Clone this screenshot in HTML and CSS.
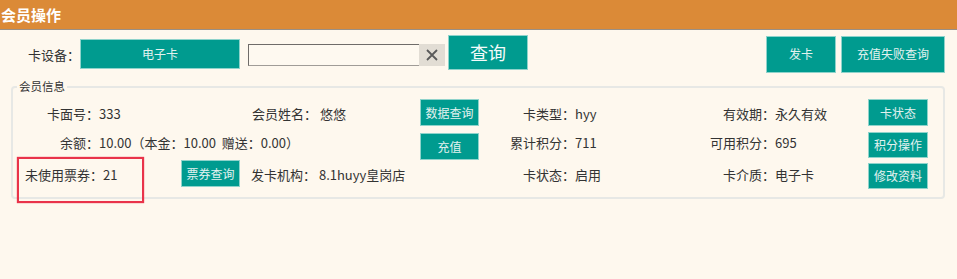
FILE: index.html
```html
<!DOCTYPE html>
<html lang="zh-CN">
<head>
<meta charset="utf-8">
<title>会员操作</title>
<link rel="stylesheet" href="styles.css">
</head>
<body>
<div class="header">会员操作</div>
<div class="toolbar">
  <span class="tb-label">卡设备：</span>
  <button class="btn btn-device">电子卡</button>
  <span class="search">
    <input class="search-input" type="text">
    <span class="search-clear">
      <svg width="14" height="14" viewBox="0 0 14 14"><path d="M2 2 L12 12 M12 2 L2 12" stroke="#5a5a5a" stroke-width="1.8" fill="none"/></svg>
    </span>
  </span>
  <button class="btn btn-query">查询</button>
  <span class="spacer"></span>
  <button class="btn btn-top btn-issue">发卡</button>
  <button class="btn btn-top btn-fail">充值失败查询</button>
</div>
<section class="info">
  <span class="info-legend">会员信息</span>
  <div class="grid">
    <span class="lbl r1 c1">卡面号：</span>
    <span class="val r1 c2">333</span>
    <span class="val r1 c3">会员姓名：&nbsp;悠悠</span>
    <button class="btn btn-sm r1 c4">数据查询</button>
    <span class="lbl r1 c5">卡类型：</span>
    <span class="val r1 c6">hyy</span>
    <span class="lbl r1 c7">有效期：</span>
    <span class="val r1 c8">永久有效</span>
    <button class="btn btn-sm r1 c9">卡状态</button>

    <span class="lbl r2 c1">余额：</span>
    <span class="val r2 c23">10.00（本金：10.00&nbsp;&nbsp;赠送：0.00）</span>
    <button class="btn btn-sm r2 c4 btn-recharge">充值</button>
    <span class="lbl r2 c5">累计积分：</span>
    <span class="val r2 c6">711</span>
    <span class="lbl r2 c7">可用积分：</span>
    <span class="val r2 c8">695</span>
    <button class="btn btn-sm r2 c9 btn-points">积分操作</button>

    <div class="ticket-cell r3 c12">
      <span class="ticket">未使用票券：21</span>
      <button class="btn btn-sm">票券查询</button>
    </div>
    <span class="val r3 c3 issuer">发卡机构：&nbsp;8.1huyy皇岗店</span>
    <span class="lbl r3 c5">卡状态：</span>
    <span class="val r3 c6">启用</span>
    <span class="lbl r3 c7">卡介质：</span>
    <span class="val r3 c8">电子卡</span>
    <button class="btn btn-sm r3 c9 btn-edit">修改资料</button>
  </div>
  <div class="highlight"></div>
</section>
</body>
</html>
```
FILE: styles.css
```css
* { box-sizing: border-box; }
html, body {
  margin: 0;
  padding: 0;
  background: #fef8ee;
  font-family: "Noto Sans CJK SC", "Microsoft YaHei", "Noto Sans", sans-serif;
  color: #333;
  font-size: 13px;
}
body {
  min-height: 279px;
}
.header {
  height: 30px;
  line-height: 29px;
  background: #db8a37;
  border-bottom: 1px solid #9a8f84;
  color: #fff;
  font-weight: bold;
  font-size: 15px;
  padding-left: 1px;
}
.btn {
  background: #009b8f;
  border: 1px solid #8fd3cb;
  color: #e3f2ef;
  font-family: inherit;
  font-size: 12px;
  padding: 0;
  margin: 0;
  line-height: 1;
  cursor: pointer;
}
.toolbar {
  height: 48px;
  display: flex;
  align-items: center;
  padding-left: 28px;
  padding-right: 12px;
}
.tb-label {
  width: 52px;
  font-size: 13px;
}
.btn-device {
  width: 160px;
  height: 30px;
  margin-top: -1px;
}
.search {
  display: flex;
  margin-left: 8px;
  height: 22px;
  margin-top: 1px;
}
.search-input {
  width: 171px;
  height: 22px;
  margin: 0;
  padding: 0 3px;
  background: #fef9f0;
  border: 1px solid #a09c97;
  border-top-color: #6f6c69;
  border-left-color: #6f6c69;
  border-right: none;
  outline: none;
}
.search-clear {
  width: 26px;
  height: 22px;
  background: #e2ddd4;
  display: flex;
  align-items: center;
  justify-content: center;
}
.btn-query {
  width: 80px;
  height: 35px;
  margin-left: 3px;
  margin-top: -4px;
  font-size: 18px;
  color: #f4fbfa;
}
.spacer { flex: 1; }
.btn-top {
  height: 37px;
}
.btn-issue { width: 70px; }
.btn-fail { width: 104px; margin-left: 5px; }

.info {
  position: relative;
  margin: 8px 12px 0 11px;
  padding: 8px 14px 8px 0;
  border: 2px solid #e7e8e5;
  border-radius: 4px;
}
.info-legend {
  position: absolute;
  left: 4px;
  top: -10px;
  font-size: 11.5px;
  line-height: 16px;
  padding: 0 2px;
  background: #fef8ee;
  color: #333;
}
.grid {
  display: grid;
  grid-template-columns: 86px 153px 168px 59px 96px 130px 70px 93px 60px;
  grid-template-rows: 33px 31px 29px;
  align-items: center;
}
.lbl { text-align: right; white-space: nowrap; }
.val { white-space: nowrap; }
.r1 { grid-row: 1; }
.r2 { grid-row: 2; }
.r3 { grid-row: 3; }
.c1 { grid-column: 1; }
.c2 { grid-column: 2; }
.c3 { grid-column: 3; }
.c4 { grid-column: 4; }
.c5 { grid-column: 5; }
.c6 { grid-column: 6; }
.c7 { grid-column: 7; }
.c8 { grid-column: 8; }
.c9 { grid-column: 9; }
.c23 { grid-column: 2 / 4; }
.c12 { grid-column: 1 / 3; }
.r1.lbl, .r1.val { margin-top: 2px; }
.r2.lbl, .r2.val { margin-top: -4px; }
.btn-sm {
  height: 27px;
  width: 100%;
}
.btn-recharge { margin-top: 4px; }
.btn-points { height: 26px; }
.btn-edit { height: 26px; margin-top: 2px; }
.ticket-cell {
  display: flex;
  align-items: center;
  height: 100%;
}
.ticket-cell .btn-sm {
  width: 59px;
  height: 27px;
  margin-top: -2px;
}
.ticket {
  width: 156px;
  margin-left: 12px;
  line-height: 18px;
}
.highlight {
  position: absolute;
  left: 4px;
  top: 69px;
  width: 127px;
  height: 46px;
  border: 2px solid #e9334a;
  box-shadow: 0 0 1px #e9334a;
  pointer-events: none;
}
.issuer { margin-left: -1px; }
```
